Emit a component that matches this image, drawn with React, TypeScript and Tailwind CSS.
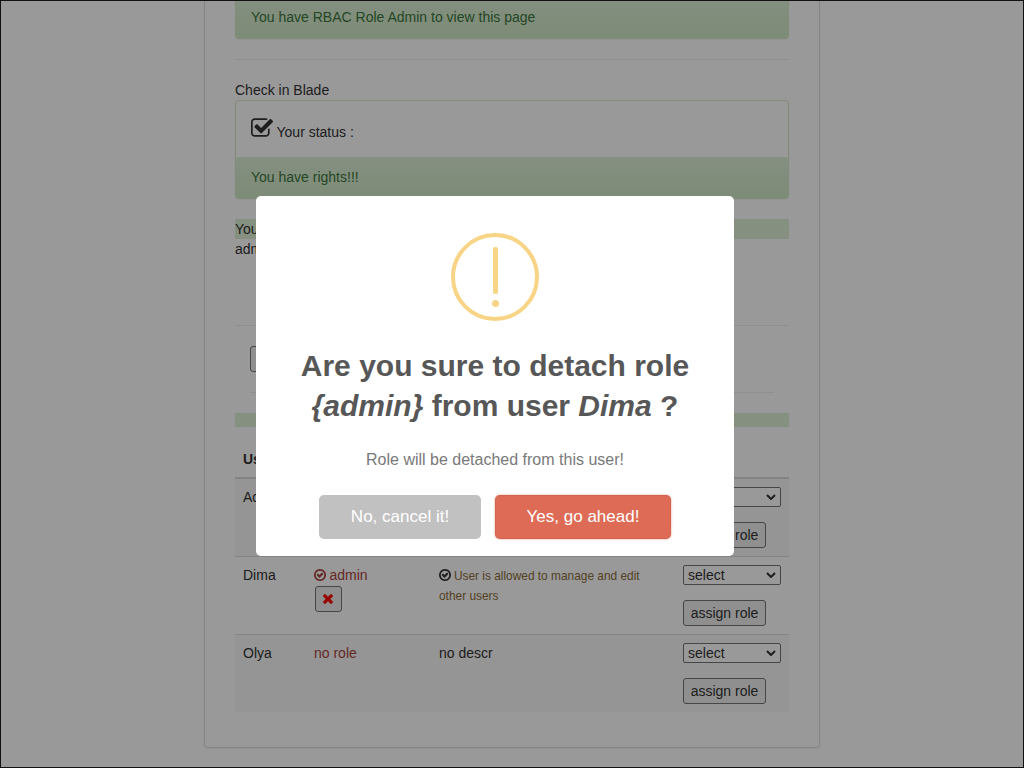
import type { ReactNode } from "react";

const CHECK_SQUARE =
  "M1472 930v318q0 119-84.5 203.5t-203.5 84.5h-832q-119 0-203.5-84.5t-84.5-203.5v-832q0-119 84.5-203.5t203.5-84.5h832q63 0 117 25 15 7 18 23 3 17-9 29l-49 49q-10 10-23 10-3 0-9-2-23-6-45-6h-832q-66 0-113 47t-47 113v832q0 66 47 113t113 47h832q66 0 113-47t47-113v-254q0-13 9-22l64-64q10-10 23-10 6 0 12 3 20 8 20 29zm231-489l-814 814q-24 24-57 24t-57-24l-430-430q-24-24-24-57t24-57l110-110q24-24 57-24t57 24l263 263 647-647q24-24 57-24t57 24l110 110q24 24 24 57t-24 57z";
const CHECK_CIRCLE =
  "M1299 813l-422 422q-19 19-45 19t-45-19l-294-294q-19-19-19-45t19-45l102-102q19-19 45-19t45 19l147 147 275-275q19-19 45-19t45 19l102 102q19 19 19 45t-19 45zm141 83q0-148-73-273t-198-198-273-73-273 73-198 198-73 273 73 273 198 198 273 73 273-73 198-198 73-273zm224 0q0 209-103 385.5t-279.5 279.5-385.5 103-385.5-103-279.5-279.5-103-385.5 103-385.5 279.5-279.5 385.5-103 385.5 103 279.5 279.5 103 385.5z";
const TIMES =
  "M1490 1322q0 40-28 68l-136 136q-28 28-68 28t-68-28l-294-294-294 294q-28 28-68 28t-68-28l-136-136q-28-28-28-68t28-68l294-294-294-294q-28-28-28-68t28-68l136-136q28-28 68-28t68 28l294 294 294-294q28-28 68-28t68 28l136 136q28 28 28 68t-28 68l-294 294 294 294q28 28 28 68z";

function CheckCircle() {
  return (
    <svg viewBox="128 128 1536 1536" className="inline-block size-3 align-[-1px]" fill="currentColor">
      <path d={CHECK_CIRCLE} />
    </svg>
  );
}

function RoleButton({ children, className = "" }: { children: ReactNode; className?: string }) {
  return (
    <button
      className={
        "flex h-[26px] items-center justify-center rounded-[3px] border border-[#767676] bg-[#efefef] leading-5 text-[#333] " +
        className
      }
    >
      {children}
    </button>
  );
}

function AssignCell() {
  return (
    <div className="flex flex-col gap-[15px]">
      <div className="flex h-5 w-[98px] items-center justify-between rounded-[2px] border border-[#767676] bg-white pr-1 pl-1 text-[#333]">
        <span>select</span>
        <svg viewBox="0 0 10 6" className="h-1.5 w-2.5" fill="none" stroke="currentColor" strokeWidth="2">
          <path d="M1 1l4 4 4-4" />
        </svg>
      </div>
      <RoleButton className="w-[83px]">assign role</RoleButton>
    </div>
  );
}

function Row({ name, role, descr, className }: { name: string; role: ReactNode; descr: ReactNode; className: string }) {
  return (
    <div className={"grid grid-cols-[71px_125px_244px_114px] *:px-2 " + className}>
      <div>{name}</div>
      <div className="text-[#a94442]">{role}</div>
      <div>{descr}</div>
      <div>
        <AssignCell />
      </div>
    </div>
  );
}

function Page() {
  return (
    <main className="ml-[204px] h-[748px] w-[616px] rounded-b border border-t-0 border-[#ddd] px-[30px] shadow-[0_1px_1px_rgba(0,0,0,0.05)]">
      <div className="h-[39px] rounded-b border border-t-0 border-[#d6e9c6] shadow-[0_1px_2px_rgba(0,0,0,0.05)]">
        <div className="h-[38px] border-b border-[#d6e9c6] bg-linear-to-b from-[#dcefd5] to-[#d0e9c6] px-[15px] pt-[7px] text-[#3c763d]">
          You have RBAC Role Admin to view this page
        </div>
      </div>
      <hr className="my-5 border-[#eee]" />
      <div>Check in Blade</div>
      <div className="h-[99px] rounded border border-[#d6e9c6] shadow-[0_1px_2px_rgba(0,0,0,0.05)]">
        <div className="flex h-14 gap-1 pr-[15px] pl-[14.5px] pt-[17px]">
          <svg viewBox="64 128 1664 1408" className="h-[19px] w-[22px]" fill="currentColor">
            <path d={CHECK_SQUARE} />
          </svg>
          <span className="pt-1">Your status :</span>
        </div>
        <div className="h-[41px] rounded-t-[3px] border-b border-[#d0e9c6] bg-linear-to-b from-[#dff0d8] to-[#d0e9c6] px-[15px] py-2.5 text-[#3c763d]">
          You have rights!!!
        </div>
      </div>
      <div className="mt-5 bg-[#dff0d8]">Your roles are:</div>
      <div>admin</div>
      <hr className="mt-[66px] border-[#eee]" />
      <div className="mt-5 px-[15px]">
        <RoleButton className="w-10">Add</RoleButton>
        <hr className="mt-5 border-[#eee]" />
      </div>
      <div className="mt-5 h-3.5 bg-[#dff0d8]" />
      <div className="mt-[22px] h-[30px] border-b-2 border-[#ddd] px-2 font-bold">User</div>
      <Row name="Admin" role="" descr="" className="h-[77px] bg-[#f9f9f9] pt-2" />
      <Row
        name="Dima"
        role={
          <>
            <div>
              <CheckCircle /> <span className="-ml-[0.5px]">admin</span>
            </div>
            <RoleButton className="mt-px ml-px w-[27px]">
              <svg viewBox="302 430 1188 1188" className="mr-px size-[10px] text-[red]" fill="currentColor">
                <path d={TIMES} transform="translate(0 64)" />
              </svg>
            </RoleButton>
          </>
        }
        descr={
          <div className="h-10">
            <CheckCircle />{" "}
            <span className="-ml-px text-[11.9px] leading-[19px] text-[#8a6d3b]">
              User is allowed to manage and edit
              <span className="block leading-5">other users</span>
            </span>
          </div>
        }
        className="h-[78px] border-t border-[#ddd] pt-2"
      />
      <Row name="Olya" role="no role" descr="no descr" className="h-[78px] border-t border-[#ddd] bg-[#f9f9f9] pt-2" />
    </main>
  );
}

function ConfirmDialog() {
  return (
    <div className="absolute top-[196px] left-[256px] flex h-[360px] w-[478px] flex-col items-center rounded-[5px] bg-white pt-[37px] text-center">
      <div className="flex size-[88px] flex-col items-center gap-1.5 rounded-full border-4 border-[#f8d486] pt-2.5">
        <div className="h-[47px] w-[5px] rounded-[2px] bg-[#f8d486]" />
        <div className="size-[7px] rounded-full bg-[#f8d486]" />
      </div>
      <h2 className="mt-[25px] text-[30px] leading-10 font-semibold text-[#575757]">
        Are you sure to detach role
        <br />
        <i>{"{admin}"}</i> from user <i>Dima</i> ?
      </h2>
      <p className="mt-6 text-base leading-5 text-[#797979]">Role will be detached from this user!</p>
      <div className="mt-[25px] flex gap-3.5 text-[17px] font-medium text-white">
        <button className="h-11 w-[162px] rounded-[5px] bg-[#c1c1c1]">No, cancel it!</button>
        <button className="h-11 w-[176px] rounded-[5px] bg-[#dd6b55] shadow-[0_0_2px_rgba(221,107,85,0.8),inset_0_0_0_1px_rgba(0,0,0,0.05)]">
          Yes, go ahead!
        </button>
      </div>
    </div>
  );
}

export default function App() {
  return (
    <div className="relative h-[768px] w-[1024px] overflow-hidden bg-white font-['Liberation_Sans',Arial,sans-serif] text-sm leading-5 text-[#333]">
      <Page />
      <div className="absolute inset-0 border border-[#111] bg-black/40" />
      <ConfirmDialog />
    </div>
  );
}
